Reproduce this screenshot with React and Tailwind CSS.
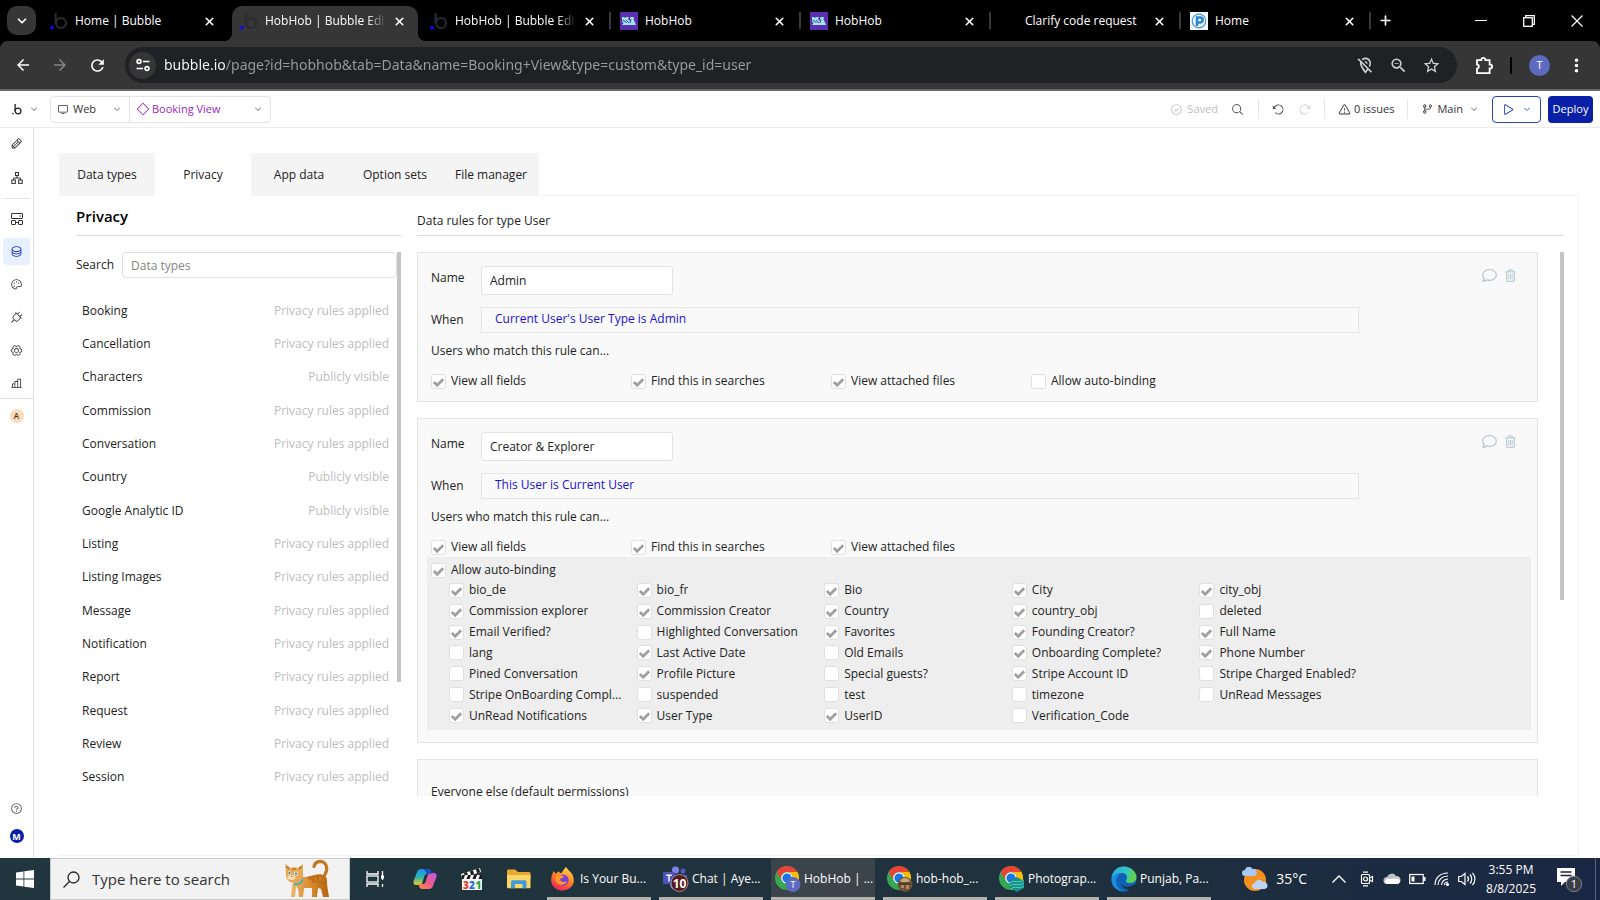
import React from "react";
import {
  PiPencil, PiDatabase, PiPalette, PiPlug, PiGearSix, PiChartBar, PiQuestion, PiWarning, PiGitBranch,
  PiPlay, PiMagnifyingGlass, PiArrowCounterClockwise, PiArrowClockwise, PiMonitor, PiDiamond,
  PiCheckCircle, PiCaretDown,
} from "react-icons/pi";
import {
  MdOutlineLocationOff, MdOutlineZoomOut, MdStarOutline, MdOutlineExtension, MdMoreVert, MdRefresh,
  MdArrowBack, MdArrowForward,
} from "react-icons/md";
import { FaRegComment } from "react-icons/fa";
import { ChevronDown, Plus, X } from "lucide-react";

/* ---------- favicons ---------- */

function BubbleFavicon() {
  return (
    <svg className="h-[18px] w-[18px]" viewBox="0 0 18 18" fill="none">
      <circle cx="11" cy="11" r="5" stroke="#2b2b2e" strokeWidth="2.2" />
      <path d="M5.6 1v10" stroke="#2b2b2e" strokeWidth="2.2" />
      <circle cx="2" cy="15.6" r="1.9" fill="#0a0af0" />
    </svg>
  );
}

function HobHobFavicon() {
  return (
    <svg className="h-[18px] w-[18px]" viewBox="0 0 18 18">
      <rect width="18" height="18" fill="#5b2fb0" />
      <path d="M2 5h2l1 1 1-1h3l-1 2 1.500 2 1-4h3.500l-.5 2 2.500 6H2l1.500-2L2 9.500z" fill="#9be8e2" />
      <path d="M2.500 8l4 2.500M6 8l3 3M11 7l-1 4" stroke="#5b2fb0" strokeWidth="1" />
    </svg>
  );
}

function HomeFavicon() {
  return (
    <svg className="h-[18px] w-[18px]" viewBox="0 0 18 18" fill="none">
      <rect width="18" height="18" fill="#f4f9fd" />
      <circle cx="9" cy="9" r="6.800" stroke="#4a96d8" strokeWidth="1.200" />
      <path d="M7 14V5.500h3.200a2.500 2.500 0 010 5H7" stroke="#2d83d0" strokeWidth="2.600" />
    </svg>
  );
}

const browserTabs = [
  { title: "Home | Bubble", icon: <BubbleFavicon /> },
  { title: "HobHob | Bubble Edi", icon: <BubbleFavicon />, active: true, fade: true },
  { title: "HobHob | Bubble Edi", icon: <BubbleFavicon />, fade: true },
  { title: "HobHob", icon: <HobHobFavicon /> },
  { title: "HobHob", icon: <HobHobFavicon /> },
  { title: "Clarify code request", icon: null },
  { title: "Home", icon: <HomeFavicon /> },
];

function BrowserTab({ tab, sepAfter }) {
  return (
    <div
      className={
        "relative flex h-[35px] w-[186px] items-center pr-3 pb-[5px] pl-2 " +
        (tab.active ? "rounded-t-[10px] bg-[#363636]" : "")
      }
    >
      {tab.active && (
        <>
          <span className="absolute bottom-0 -left-2 h-2 w-2 bg-[radial-gradient(circle_at_0_0,#000_8px,#363636_8px)]" />
          <span className="absolute -right-2 bottom-0 h-2 w-2 bg-[radial-gradient(circle_at_100%_0,#000_8px,#363636_8px)]" />
        </>
      )}
      <span className="mr-[7px] h-[18px] w-[18px] shrink-0">{tab.icon}</span>
      <button
        type="button"
        className={
          "min-w-0 flex-1 overflow-hidden text-left text-[12px] leading-4 whitespace-nowrap text-white " +
          (tab.fade ? "[mask-image:linear-gradient(90deg,#000_82%,transparent_98%)]" : "")
        }
      >
        {tab.title}
      </button>
      <button type="button" aria-label="Close tab" className="ml-1 text-white">
        <X size={13} strokeWidth={3} />
      </button>
      {sepAfter && <span className="absolute top-[6px] -right-[3px] h-[17px] w-[2px] bg-[#3a3a3a]" />}
    </div>
  );
}

function TabStrip() {
  return (
    <div className="flex h-[41px] shrink-0 items-end bg-black">
      <button
        type="button"
        aria-label="Search tabs"
        className="mb-[6px] ml-[7px] flex h-[29px] w-[29px] shrink-0 items-center justify-center rounded-[10px] bg-[#363636] text-white"
      >
        <ChevronDown size={14} strokeWidth={3} />
      </button>
      <div className="ml-[6px] flex gap-1">
        {browserTabs.map((t, i) => (
          <BrowserTab key={i} tab={t} sepAfter={i >= 2} />
        ))}
      </div>
      <button type="button" aria-label="New tab" className="mb-[13px] ml-[10px] text-white">
        <Plus size={15} strokeWidth={2.600} />
      </button>
      <div className="mr-[17px] mb-[14px] ml-auto flex items-center gap-9 text-white">
        <button type="button" aria-label="Minimize">
          <svg className="h-3 w-3" viewBox="0 0 12 12" stroke="currentColor">
            <path d="M0 5.500h12" />
          </svg>
        </button>
        <button type="button" aria-label="Restore">
          <svg className="h-3 w-3" viewBox="0 0 12 12" stroke="currentColor" fill="none" strokeWidth="1.300">
            <rect x="0.700" y="2.700" width="8.600" height="8.600" />
            <path d="M2.700 2.700V.7h8.600v8.600h-2" />
          </svg>
        </button>
        <button type="button" aria-label="Close window">
          <svg className="h-3 w-3" viewBox="0 0 12 12" stroke="currentColor" strokeWidth="1.200">
            <path d="M.5.500l11 11M11.500.500l-11 11" />
          </svg>
        </button>
      </div>
    </div>
  );
}

function ExtensionIcon() {
  return (
    <svg className="h-[19px] w-[19px]" viewBox="0 0 19 19" fill="none" stroke="currentColor" strokeWidth="1.800">
      <path d="M2 4.200h4.300v-.4a2 2 0 014 0v.4h4.300v4.300h.5a2 2 0 010 4h-.5v4.600H2v-4.400c2.600-.6 2.600-3.600 0-4.200z" />
    </svg>
  );
}

function Toolbar() {
  return (
    <div className="shrink-0 bg-black">
      <div className="flex h-[50px] items-center rounded-t-[8px] border-b-2 border-[#6a6a6a] bg-[#363636] text-white">
        <div className="ml-[14px] flex w-[111px] items-center gap-[19px]">
          <button type="button" aria-label="Back"><MdArrowBack size={18} /></button>
          <button type="button" aria-label="Forward" className="text-[#858585]"><MdArrowForward size={18} /></button>
          <button type="button" aria-label="Reload"><MdRefresh size={19} /></button>
        </div>
        <div className="flex h-9 flex-1 items-center rounded-full bg-[#202124] pr-4 pl-1">
          <button
            type="button"
            aria-label="Site information"
            className="flex h-[27px] w-[27px] items-center justify-center rounded-full bg-[#363636]"
          >
            <svg className="h-[14px] w-[14px]" viewBox="0 0 14 14" fill="none" stroke="#fff" strokeWidth="1.700">
              <circle cx="3" cy="3.500" r="1.900" />
              <path d="M7 3.500h6.500M.5 10.500H7" />
              <circle cx="11" cy="10.500" r="1.900" />
            </svg>
          </button>
          <input
            aria-label="Address"
            defaultValue="bubble.io/page?id=hobhob&tab=Data&name=Booking+View&type=custom&type_id=user"
            className="ml-2 min-w-0 flex-1 bg-[linear-gradient(90deg,#ffffff_0_62px,#9a9da1_62px)] bg-clip-text font-['Noto_Sans','Open_Sans',sans-serif] text-[14px] leading-5 text-transparent outline-none"
          />
          <div className="flex items-center gap-[14px] text-[#d0d0d0]">
            <button type="button" aria-label="Location blocked"><MdOutlineLocationOff size={19} /></button>
            <button type="button" aria-label="Zoom"><MdOutlineZoomOut size={19} /></button>
            <button type="button" aria-label="Bookmark"><MdStarOutline size={19} /></button>
          </div>
        </div>
        <button type="button" aria-label="Extensions" className="ml-[18px]"><ExtensionIcon /></button>
        <span className="ml-4 h-[17px] w-[2px] bg-black" />
        <button
          type="button"
          aria-label="Profile"
          className="ml-[17px] flex h-[21px] w-[21px] items-center justify-center rounded-full bg-[#5c6bc0] text-[11px] leading-4"
        >
          T
        </button>
        <button type="button" aria-label="Menu" className="mr-[13px] ml-4"><MdMoreVert size={21} /></button>
      </div>
    </div>
  );
}

/* ---------- editor header ---------- */

function Divider() {
  return <span className="h-5 w-px bg-[#e6e6e6]" />;
}

function EditorHeader() {
  return (
    <header className="flex h-[37px] shrink-0 items-center border-b border-[#ebebeb] bg-white text-[11px] leading-4 text-[#333]">
      <button type="button" aria-label="Bubble menu" className="ml-3 flex w-[38px] items-center gap-2">
        <svg className="h-[11px] w-[10px]" viewBox="0 0 10 11" fill="none" stroke="#222" strokeWidth="1.300">
          <circle cx="6" cy="7" r="2.900" />
          <path d="M3.100 0v7" />
          <circle cx="0.900" cy="9.600" r="0.800" fill="#222" stroke="none" />
        </svg>
        <PiCaretDown size={8} />
      </button>
      <div className="flex h-[27px] items-stretch rounded-[4px] border border-[#e3e3e3]">
        <div className="flex w-[79px] items-center border-r border-[#e3e3e3] pr-2 pl-[6px]">
          <PiMonitor size={12} />
          <select aria-label="Platform" className="ml-1 min-w-0 flex-1 appearance-none bg-transparent outline-none">
            <option>Web</option>
          </select>
          <PiCaretDown size={8} />
        </div>
        <div className="flex w-[140px] items-center pr-2 pl-[6px] text-[#9b1fc1]">
          <PiDiamond size={14} />
          <select aria-label="Page" className="ml-[2px] min-w-0 flex-1 appearance-none bg-transparent outline-none">
            <option>Booking View</option>
          </select>
          <PiCaretDown size={8} className="text-[#333]" />
        </div>
      </div>
      <div className="mr-[7px] ml-auto flex items-center">
        <span className="flex items-center gap-1 text-[#bdbdbd]">
          <PiCheckCircle size={13} />
          Saved
        </span>
        <button type="button" aria-label="Search" className="mr-[14px] ml-[13px]"><PiMagnifyingGlass size={13} /></button>
        <Divider />
        <button type="button" aria-label="Undo" className="ml-[13px]"><PiArrowCounterClockwise size={13} /></button>
        <button type="button" aria-label="Redo" className="mx-[13px] text-[#c9c9c9]"><PiArrowClockwise size={13} /></button>
        <Divider />
        <button type="button" className="mx-[13px] flex items-center gap-[3px]">
          <PiWarning size={13} />0 issues
        </button>
        <Divider />
        <button type="button" className="ml-[13px] flex items-center gap-1">
          <PiGitBranch size={12} />
          Main
          <PiCaretDown size={8} className="ml-[3px]" />
        </button>
        <div className="ml-[14px] flex h-[27px] w-[49px] items-center justify-between rounded-[4px] border border-[#2743c4] pr-[9px] pl-2 text-[#0f2bb0]">
          <button type="button" aria-label="Preview"><PiPlay size={13} /></button>
          <button type="button" aria-label="Preview options"><PiCaretDown size={8} /></button>
        </div>
        <button type="button" className="ml-[7px] h-[27px] w-[45px] rounded-[4px] bg-[#0a20a8] text-center font-medium text-white">
          Deploy
        </button>
      </div>
    </header>
  );
}

/* ---------- sidebar ---------- */

function TreeIcon() {
  return (
    <svg className="h-3 w-3" viewBox="0 0 12 12" fill="none" stroke="currentColor">
      <rect x="4.500" y="0.500" width="3" height="3" />
      <rect x="0.800" y="8" width="3.600" height="3.400" />
      <rect x="7.600" y="8" width="3.600" height="3.400" />
      <path d="M6 3.500V6M2.600 8V6h6.800v2" />
    </svg>
  );
}

function TemplateIcon() {
  return (
    <svg className="h-3 w-3" viewBox="0 0 12 12" fill="none" stroke="currentColor">
      <rect x="0.500" y="0.500" width="11" height="5" rx="0.500" />
      <rect x="0.500" y="7.500" width="4" height="4" rx="0.500" />
      <rect x="7.500" y="7.500" width="4" height="4" rx="0.500" />
      <path d="M4.500 9.500h3M8.500 3h1.500" />
    </svg>
  );
}

function SideButton({ label, active, children }) {
  return (
    <button
      type="button"
      aria-label={label}
      className={
        "flex h-[27px] w-[27px] items-center justify-center rounded-[4px] " +
        (active ? "bg-[#e6f0ff] text-[#1d2fc0]" : "text-[#333]")
      }
    >
      {children}
    </button>
  );
}

function Sidebar() {
  return (
    <nav className="flex w-[34px] shrink-0 flex-col items-center border-r border-[#dedede]">
      <div className="flex flex-col items-center gap-[7px] pt-[2px]">
        <SideButton label="Design"><PiPencil size={13} /></SideButton>
        <SideButton label="Workflow"><TreeIcon /></SideButton>
      </div>
      <span className="mt-[7px] h-px w-[27px] bg-[#e3e3e3]" />
      <div className="mt-[6px] flex flex-col items-center gap-[6px]">
        <SideButton label="Views"><TemplateIcon /></SideButton>
        <SideButton label="Data" active><PiDatabase size={13} /></SideButton>
        <SideButton label="Styles"><PiPalette size={13} /></SideButton>
        <SideButton label="Plugins"><PiPlug size={13} /></SideButton>
        <SideButton label="Settings"><PiGearSix size={13} /></SideButton>
        <SideButton label="Logs"><PiChartBar size={13} /></SideButton>
      </div>
      <div className="mt-px flex w-full flex-col items-center border-t border-[#dedede] pt-[10px]">
        <span className="flex h-[14px] w-[14px] items-center justify-center rounded-full bg-[#fcdcb8] text-[8px] leading-none font-semibold text-[#333]">
          A
        </span>
      </div>
      <div className="mt-auto mb-[15px] flex flex-col items-center gap-[14px]">
        <button type="button" aria-label="Help" className="text-[#444]"><PiQuestion size={13} /></button>
        <span className="flex h-[14px] w-[14px] items-center justify-center rounded-full bg-[#0a20a8] text-[9px] leading-none font-bold text-white">
          M
        </span>
      </div>
    </nav>
  );
}

/* ---------- data types list ---------- */

const RULES = "Privacy rules applied";
const OPEN = "Publicly visible";
const dataTypes = [
  ["Booking", RULES], ["Cancellation", RULES], ["Characters", OPEN], ["Commission", RULES],
  ["Conversation", RULES], ["Country", OPEN], ["Google Analytic ID", OPEN], ["Listing", RULES],
  ["Listing Images", RULES], ["Message", RULES], ["Notification", RULES], ["Report", RULES],
  ["Request", RULES], ["Review", RULES], ["Session", RULES],
];

function TypesColumn() {
  return (
    <section className="flex w-[325px] shrink-0 flex-col">
      <h1 className="flex h-10 items-center border-b border-[#dcdcdc] text-[15px] leading-5 font-semibold text-black">
        Privacy
      </h1>
      <div className="mt-4 flex min-h-0 flex-1 overflow-hidden">
        <div className="min-w-0 flex-1">
          <div className="flex items-center">
            <label htmlFor="type-search" className="w-[46px] leading-4">Search</label>
            <input
              id="type-search"
              placeholder="Data types"
              className="h-[26px] min-w-0 flex-1 rounded-[4px] border border-[#e0e0e0] px-2 outline-none placeholder:text-[#858585]"
            />
          </div>
          <ul className="mt-4 grid h-[500px] auto-rows-fr">
            {dataTypes.map(([name, note]) => (
              <li key={name} className="flex items-center justify-between pr-2 pl-[6px]">
                <a href="#type" className="text-[#222]">{name}</a>
                <span className="text-[#bdbdbd]">{note}</span>
              </li>
            ))}
          </ul>
        </div>
        <div className="h-[79%] w-1 bg-[#c4c4c4]" />
      </div>
    </section>
  );
}

/* ---------- rule cards ---------- */

function Check({ label, on }) {
  return (
    <label className="flex min-w-0 items-center gap-[5px] leading-4">
      <span className="grid h-[15px] w-[15px] shrink-0">
        <input
          type="checkbox"
          defaultChecked={on}
          className="peer h-[15px] w-[15px] appearance-none rounded-[3px] border border-[#e0e0e0] bg-white [grid-area:1/1]"
        />
        <svg
          className="pointer-events-none hidden h-[15px] w-[15px] [grid-area:1/1] peer-checked:block"
          viewBox="0 0 15 15"
          fill="none"
          stroke="#a0a0a0"
          strokeWidth="2.800"
        >
          <path d="M2.800 8l3.400 3.200L12.200 5.200" />
        </svg>
      </span>
      <span className="truncate">{label}</span>
    </label>
  );
}

const fields = [
  ["bio_de", 1], ["bio_fr", 1], ["Bio", 1], ["City", 1], ["city_obj", 1],
  ["Commission explorer", 1], ["Commission Creator", 1], ["Country", 1], ["country_obj", 1], ["deleted", 0],
  ["Email Verified?", 1], ["Highlighted Conversation", 0], ["Favorites", 1], ["Founding Creator?", 1], ["Full Name", 1],
  ["lang", 0], ["Last Active Date", 1], ["Old Emails", 0], ["Onboarding Complete?", 1], ["Phone Number", 1],
  ["Pined Conversation", 0], ["Profile Picture", 1], ["Special guests?", 0], ["Stripe Account ID", 1], ["Stripe Charged Enabled?", 0],
  ["Stripe OnBoarding Compl...", 0], ["suspended", 0], ["test", 0], ["timezone", 0], ["UnRead Messages", 0],
  ["UnRead Notifications", 1], ["User Type", 1], ["UserID", 1], ["Verification_Code", 0],
];

function TrashIcon() {
  return (
    <svg className="h-[13px] w-[11px]" viewBox="0 0 11 13" fill="none" stroke="currentColor">
      <path d="M.5 2.800h10M3.500 2.500L4 .8h3l.5 1.700M1.600 3v8.200c0 .8.400 1.200 1 1.200h5.800c.6 0 1-.4 1-1.200V3" strokeWidth="1.300" />
      <path d="M3.800 5v5.500M5.500 5v5.500M7.200 5v5.500" />
    </svg>
  );
}

function RuleCard({ id, name, when, binding }) {
  return (
    <article className="border border-[#e4e4e4] bg-[#f9f9f9] px-[9px] pt-[13px] pb-[12px]">
      <div className="flex items-start pl-1">
        <label htmlFor={id} className="w-[50px] pt-1 leading-4">Name</label>
        <input
          id={id}
          defaultValue={name}
          className="h-[29px] w-48 rounded-[3px] border border-[#e2e2e2] bg-white px-2 outline-none"
        />
        <div className="mr-3 ml-auto flex gap-2 pt-[2px] text-[#bccdd3]">
          <button type="button" aria-label="Comment"><FaRegComment size={15} /></button>
          <button type="button" aria-label="Delete rule"><TrashIcon /></button>
        </div>
      </div>
      <div className="mt-3 flex items-center pl-1">
        <span className="w-[50px] leading-4">When</span>
        <button
          type="button"
          className="h-[26px] w-[80%] border border-[#e4e4e4] px-[13px] pb-[2px] text-left leading-4 text-[#1c12cf]"
        >
          {when}
        </button>
      </div>
      <p className="mt-[10px] pl-1 leading-4">Users who match this rule can...</p>
      <div className="mt-[14px] grid grid-cols-[repeat(4,200px)] pl-1">
        <Check label="View all fields" on />
        <Check label="Find this in searches" on />
        <Check label="View attached files" on />
        {!binding && <Check label="Allow auto-binding" />}
      </div>
      {binding && (
        <div className="mt-[2px] -mr-[3px] bg-[#eeeeee] pt-[5px] pb-1 pl-1">
          <Check label="Allow auto-binding" on />
          <div className="mt-[2px] mr-36 ml-[18px] grid h-[146px] auto-rows-fr grid-cols-5">
            {fields.map(([f, on]) => (
              <Check key={f} label={f} on={!!on} />
            ))}
          </div>
        </div>
      )}
    </article>
  );
}

function RulesColumn() {
  return (
    <section className="flex min-w-0 flex-1 flex-col">
      <h2 className="flex h-10 items-center border-b border-[#dcdcdc] pt-[11px] leading-4">Data rules for type User</h2>
      <div className="mt-4 flex min-h-0 flex-1 overflow-hidden">
        <div className="flex min-w-0 flex-1 flex-col gap-4">
          <RuleCard id="rule-admin" name="Admin" when="Current User's User Type is Admin" />
          <RuleCard id="rule-creator" name="Creator & Explorer" when="This User is Current User" binding />
          <article className="border border-[#e4e4e4] bg-[#f9f9f9] px-[13px] pt-6 pb-12">
            <h3 className="leading-4">Everyone else (default permissions)</h3>
          </article>
        </div>
        <div className="ml-[22px] h-[64%] w-1 bg-[#c4c4c4]" />
      </div>
    </section>
  );
}

const pageTabs = ["Data types", "Privacy", "App data", "Option sets", "File manager"];

function Workspace() {
  return (
    <div className="flex min-h-0 flex-1 bg-white text-[12px] leading-4 text-[#222]">
      <Sidebar />
      <main className="mt-[25px] mr-[21px] mb-[2px] ml-[25px] flex min-w-0 flex-1 flex-col">
        <div className="flex h-[43px] shrink-0 items-stretch">
          <div className="grid w-[480px] grid-cols-5">
            {pageTabs.map((t) => (
              <button key={t} type="button" className={t === "Privacy" ? "bg-white" : "bg-[#f4f4f4]"}>
                {t}
              </button>
            ))}
          </div>
          <span className="flex-1 border-b border-[#f2f2f2]" />
        </div>
        <div className="flex min-h-0 flex-1 gap-4 border-r border-b border-[#f2f2f2] pr-[14px] pb-[59px] pl-[17px]">
          <TypesColumn />
          <RulesColumn />
        </div>
      </main>
    </div>
  );
}

/* ---------- taskbar ---------- */

function Cat() {
  return (
    <svg className="h-10 w-[50px]" viewBox="0 0 50 40" fill="none">
      <defs>
        <linearGradient id="fur" x1="0" y1="0" x2="1" y2="0">
          <stop stopColor="#eab867" /><stop offset="0.500" stopColor="#d98c30" /><stop offset="1" stopColor="#b4620f" />
        </linearGradient>
      </defs>
      <path d="M40 19c5-4 6-11 3-14.500-3-3.500-10-2.500-11 3" stroke="#c27722" strokeWidth="3.200" strokeLinecap="round" />
      <path d="M14 17c5 2 12 1 18-1 7-2 14 0 13 7 0 4 1 8 2 15h-6l-2-8-3-1-1 9h-5v-9h-8l-1 9h-4l-1-8-2-3-1 11H9l1-11z" fill="url(#fur)" />
      <path d="M25 18c6-1 10-3 15-1 3 1 5 4 5 7-6-2-13 4-20-6z" fill="#bf6d16" />
      <path d="M28 19l1 4M33 18l1 5M38 18v4" stroke="#d98c30" />
      <path d="M4 14L3 5l6 4c2-1 5-1 7 0l5-4v9c1 5-2 10-8 10S3 20 4 14z" fill="#e5a857" />
      <path d="M4.500 7.500l2.500 2.500M19.500 7.500L17 10M11 9v2M13 9v2" stroke="#b9661a" strokeWidth="1.200" />
      <circle cx="7.500" cy="14" r="1.700" fill="#e9f7fa" />
      <circle cx="14" cy="14.500" r="1.900" fill="#e9f7fa" />
      <circle cx="7.500" cy="14" r="1" fill="#1b6f8f" />
      <circle cx="14" cy="14.500" r="1.100" fill="#1b6f8f" />
      <ellipse cx="9.500" cy="18.500" rx="4" ry="2.500" fill="#f6dcae" />
      <path d="M9 17h2l-1 1z" fill="#9c4a2a" />
      <path d="M12 25c4 1 8-1 9-5" stroke="#29b6c5" strokeWidth="1.500" />
    </svg>
  );
}

function CopilotIcon() {
  return (
    <svg className="h-6 w-6" viewBox="0 0 24 24" fill="none">
      <defs>
        <linearGradient id="cpA" x1="0" y1="0" x2="0" y2="1">
          <stop stopColor="#1f8ef0" /><stop offset="0.500" stopColor="#29b7b0" /><stop offset="1" stopColor="#f2c31c" />
        </linearGradient>
        <linearGradient id="cpB" x1="1" y1="0" x2="0" y2="1">
          <stop stopColor="#b55cf0" /><stop offset="0.500" stopColor="#ee5a8e" /><stop offset="1" stopColor="#f9913c" />
        </linearGradient>
      </defs>
      <path d="M8 2h7c1.600 0 2.300 1 2.800 2.500L18.500 7H14c-1.500 0-2.300 1-2.800 2.500l-1.800 6C8.900 17 8 18 6.500 18H3C1 18 0 16.500.6 14L4 5c.7-2 2-3 4-3z" fill="url(#cpA)" />
      <path d="M16 22H9c-1.600 0-2.300-1-2.800-2.500L5.500 17H10c1.500 0 2.300-1 2.800-2.500l1.800-6C15.100 7 16 6 17.500 6H21c2 0 3 1.500 2.400 4L20 19c-.7 2-2 3-4 3z" fill="url(#cpB)" />
      <path d="M11 2h4c1.600 0 2.300 1 2.800 2.500L18.500 7H14z" fill="#1b4fc4" />
    </svg>
  );
}

function ClapperIcon() {
  return (
    <svg className="h-6 w-6" viewBox="0 0 24 24">
      <path d="M1 7L20 1l1 4L2 11z" fill="#f5f5f5" />
      <path d="M4 6l3-1 1 4-3 1zM10 4.200l3-1 1 4-3 1zM16 2.300l3-1 1 4-3 1z" fill="#1a1a1a" />
      <rect x="2" y="8" width="20" height="15" rx="1" fill="#f7f7f7" />
      <path d="M2 8h20v4H2z" fill="#1a1a1a" />
      <path d="M5 8h3l-1.500 4h-3zM11 8h3l-1.500 4h-3zM17 8h3l-1.500 4h-3z" fill="#f7f7f7" />
      <text x="3" y="21.500" fontSize="10" fontWeight="800" fill="#e03c2d">3</text>
      <text x="9" y="21.500" fontSize="10" fontWeight="800" fill="#2471cf">2</text>
      <text x="15.500" y="21.500" fontSize="10" fontWeight="800" fill="#28a745">1</text>
    </svg>
  );
}

function FolderIcon() {
  return (
    <svg className="h-6 w-6" viewBox="0 0 24 24">
      <path d="M0 4c0-1 .5-1.500 1.500-1.500H8L11 5h11c1 0 1.500.5 1.500 1.500V12H0z" fill="#e8a82e" />
      <path d="M0 8h23.500v12c0 .8-.4 1.200-1.200 1.200H1.200C.4 21.200 0 20.800 0 20z" fill="#fbd667" />
      <path d="M4 21.200V15c0-1 .7-1.700 1.700-1.700h12.100c1 0 1.700.7 1.700 1.700v6.200h-4V17H8v4.200z" fill="#3f9bdc" />
    </svg>
  );
}

function FirefoxIcon() {
  return (
    <svg className="h-6 w-6" viewBox="0 0 24 24">
      <defs>
        <linearGradient id="ffA" x1="0.800" y1="0" x2="0.300" y2="1">
          <stop stopColor="#ffe14a" /><stop offset="0.450" stopColor="#ff8a20" /><stop offset="1" stopColor="#f0205f" />
        </linearGradient>
      </defs>
      <path d="M15 0c1 2 4 4 6 7 3 5 2 10-1 13-4 4-11 5-16 1C0 18-1 12 1.500 7l.8-3L5 7c1-2 2-2 3-2.500.5 1 1.500 1.500 2.500 1.500C12 4 13 2 15 0z" fill="url(#ffA)" />
      <circle cx="12" cy="13" r="5.600" fill="#7a3fd6" />
      <path d="M5 9c3-2 6 0 8 0-1 2-3 2-4 3 0 3 4 4 7 2-1 4-7 5-10 2-2-2-2-5-1-7z" fill="#ff9a2a" />
    </svg>
  );
}

function TeamsIcon() {
  return (
    <svg className="h-[26px] w-[26px]" viewBox="0 0 26 26">
      <circle cx="12.500" cy="4" r="3.600" fill="#7b83eb" />
      <circle cx="20" cy="5" r="2.500" fill="#5059c9" />
      <path d="M15 9h9v7c0 3-2 5-4.500 5S15 19 15 16z" fill="#5059c9" />
      <path d="M7 9h11v9c0 3.500-2.500 6-5.500 6S7 21.500 7 18z" fill="#7b83eb" />
      <rect x="0" y="6" width="12" height="12" rx="1" fill="#4b53bc" />
      <path d="M3.200 9.200h5.600M6 9.200v6.300" stroke="#fff" strokeWidth="1.500" />
      <circle cx="16.500" cy="17" r="8.500" fill="#5a1a1a" stroke="#9a8a8a" strokeWidth="1" />
      <text x="16.500" y="21.500" textAnchor="middle" fontSize="12" fontWeight="700" fill="#fff">10</text>
    </svg>
  );
}

function ChromeIcon({ badge }) {
  return (
    <svg className="h-[26px] w-[26px]" viewBox="0 0 26 26">
      <circle cx="12" cy="12" r="12" fill="#34a853" />
      <path d="M12 0a12 12 0 0110.400 6H12a6 6 0 00-5.200 9L1.600 6A12 12 0 0112 0z" fill="#ea4335" />
      <path d="M22.400 6A12 12 0 0112 24l5.200-9A6 6 0 0012 6z" fill="#fbbc04" />
      <circle cx="12" cy="12" r="5.800" fill="#fff" />
      <circle cx="12" cy="12" r="4.600" fill="#1a73e8" />
      {badge === "T" && (
        <>
          <circle cx="18" cy="18.500" r="7.500" fill="#5c6bc0" />
          <text x="18" y="22" textAnchor="middle" fontSize="9" fill="#fff">T</text>
        </>
      )}
      {badge === "photo" && (
        <>
          <circle cx="18" cy="18.500" r="7.500" fill="#6b5238" />
          <path d="M13 15c2-4 8-4 10 0l-2 1h-6z" fill="#c9a878" />
          <path d="M14 19h3v3h-3zM19 19h3v4h-3z" fill="#b48a58" />
          <path d="M12 18h12" stroke="#33251a" />
        </>
      )}
      {badge === "wave" && (
        <>
          <path d="M10.500 15l7-4 7.500 4v7l-7 4-7.500-4z" fill="#178f86" />
          <path d="M11 17c4-4 9 1 14-3M11 20c4-4 9 1 14-3M12 23c4-4 8 1 13-3" stroke="#54d1c4" fill="none" />
        </>
      )}
    </svg>
  );
}

function EdgeIcon() {
  return (
    <svg className="h-[26px] w-[26px]" viewBox="0 0 26 26">
      <defs>
        <linearGradient id="edA" x1="0" y1="0" x2="1" y2="0.300">
          <stop stopColor="#2aa5e8" /><stop offset="0.600" stopColor="#35c5c5" /><stop offset="1" stopColor="#5fd24f" />
        </linearGradient>
      </defs>
      <circle cx="13" cy="13" r="12.500" fill="#0f62b8" />
      <path d="M.5 13C1 5 6 .5 13 .5S25.500 6 25.500 11c0 4-3 6-6.500 6-3 0-4-1-4-2s1-1.500 1-3.500C16 9 14 7 11 7 6 7 1.500 10 .5 13z" fill="url(#edA)" />
      <path d="M.5 13C1.500 9 6 7 10 7.500c-3 1-5 4-5 8 0 5 4 9 9 10C6 26 0 20 .5 13z" fill="#1b8ee0" />
      <path d="M10 14c-1 5 4 8 10 6l5-2 1 6-4 2c-1-1 0-2 1-3-6 3-14-1-13-9z" fill="#1f303e" />
    </svg>
  );
}

function WeatherIcon() {
  return (
    <svg className="h-[25px] w-[26px]" viewBox="0 0 26 25">
      <circle cx="13" cy="13" r="11" fill="#f4901e" />
      <path d="M3 9a3 3 0 010-6 4 4 0 017.500-1A3.500 3.500 0 0112 9z" fill="#a9c8f5" />
      <path d="M13 22a3 3 0 010-6 4 4 0 017.500-1 3.500 3.500 0 012.500 7z" fill="#bcd4f8" />
    </svg>
  );
}

const running = [
  { title: "Is Your Bu...", icon: <FirefoxIcon /> },
  { title: "Chat | Aye...", icon: <TeamsIcon /> },
  { title: "HobHob | ...", icon: <ChromeIcon badge="T" />, active: true },
  { title: "hob-hob_...", icon: <ChromeIcon badge="photo" /> },
  { title: "Photograp...", icon: <ChromeIcon badge="wave" /> },
  { title: "Punjab, Pa...", icon: <EdgeIcon /> },
];

function Taskbar() {
  return (
    <footer className="flex h-[42px] shrink-0 items-stretch bg-[linear-gradient(90deg,#21363e,#1f313d_65%,#1a2744)] text-white">
      <button type="button" aria-label="Start" className="flex w-[50px] items-center justify-center">
        <svg className="h-[18px] w-[18px]" viewBox="0 0 18 18" fill="#fff">
          <path d="M0 2.500L7.500 1.400v7.200H0zM8.300 1.300L18 0v8.600H8.300zM0 9.400h7.500v7.200L0 15.500zM8.300 9.400H18V18l-9.700-1.300z" />
        </svg>
      </button>
      <div className="flex w-[300px] items-center border border-[#c8c8c8] bg-[#f2f2f2] pl-3 text-[#222]">
        <svg className="h-[17px] w-[17px]" viewBox="0 0 17 17" fill="none" stroke="#222" strokeWidth="1.300">
          <circle cx="10.500" cy="6.500" r="5.500" />
          <path d="M6.500 10.500L.5 16.500" />
        </svg>
        <input
          aria-label="Type here to search"
          placeholder="Type here to search"
          className="ml-3 min-w-0 flex-1 bg-transparent text-[15px] leading-5 outline-none placeholder:text-[#333]"
        />
        <span className="mr-[17px]"><Cat /></span>
      </div>
      <div className="flex items-center gap-[23px] pl-[15px]">
        <button type="button" aria-label="Task view" className="ml-px">
          <svg className="h-[18px] w-[18px]" viewBox="0 0 18 18" fill="none" stroke="#fff" strokeWidth="1.300">
            <path d="M1 1v3h11V1M1 17v-3h11v3M16.500 1v9M16.500 14v3" />
            <rect x="1" y="6" width="11" height="6" />
            <path d="M15 7h3" strokeWidth="3" />
          </svg>
        </button>
        <button type="button" aria-label="Copilot" className="ml-[6px]"><CopilotIcon /></button>
        <button type="button" aria-label="Video editor"><ClapperIcon /></button>
        <button type="button" aria-label="File Explorer"><FolderIcon /></button>
      </div>
      <div className="ml-4 flex gap-2">
        {running.map((r) => (
          <button
            key={r.title}
            type="button"
            className={
              "flex w-[104px] items-center gap-[3px] border-b-[3px] border-[#b3b3b0] pt-[3px] pl-1 text-[12px] leading-4 whitespace-nowrap " +
              (r.active ? "bg-[#3b444a]" : "")
            }
          >
            <span className="w-[26px]">{r.icon}</span>
            {r.title}
          </button>
        ))}
      </div>
      <div className="mr-1 ml-auto flex items-center border-r border-[#5b6478] pr-3">
        <WeatherIcon />
        <span className="mr-6 ml-2 text-[14px] leading-5">35°C</span>
        <div className="flex items-center gap-2">
          <svg className="mr-1 h-4 w-4" viewBox="0 0 16 16" fill="none" stroke="#fff" strokeWidth="1.300"><path d="M1.500 11.500L8 5l6.500 6.500" /></svg>
          <svg className="h-4 w-4" viewBox="0 0 16 16" fill="none" stroke="#fff" strokeWidth="1.200">
            <rect x="2.500" y="3.500" width="8" height="9" rx="1" /><circle cx="6.500" cy="8" r="2" /><path d="M10.500 7l3-1.500v5l-3-1.500M4 1.200h5M4 14.800h5" />
          </svg>
          <svg className="h-4 w-[18px]" viewBox="0 0 18 16"><path d="M4 13a3.500 3.500 0 010-7 5 5 0 019-1 4 4 0 011 8z" fill="#bfc3c9" /><path d="M3 13a3 3 0 013-5l9-.5A3 3 0 0115 13z" fill="#fff" /></svg>
          <svg className="h-4 w-[17px]" viewBox="0 0 17 16" fill="none" stroke="#fff" strokeWidth="1.200"><rect x="0.700" y="3.500" width="13.500" height="9" /><path d="M15.500 6v4" strokeWidth="2" /><rect x="2.500" y="5.500" width="3" height="5" fill="#fff" stroke="none" /></svg>
          <svg className="h-4 w-4" viewBox="0 0 16 16" fill="none" stroke="#fff" strokeWidth="1.200"><path d="M1 14C1 7 6 2 14 2M4 14c0-5 4-9 10-9M7.500 14c0-3.500 3-6 6.500-6M10.500 14c0-2 1.500-3 3.500-3" /><circle cx="13.500" cy="13.500" r="1" fill="#fff" /></svg>
          <svg className="h-4 w-[18px]" viewBox="0 0 18 16" fill="none" stroke="#fff" strokeWidth="1.200"><path d="M.7 5.500h2.500L7 2.500v11L3.200 10.500H.7zM9.500 5.500c1.300 1.500 1.300 3.500 0 5M12 3.500c2.300 2.500 2.300 6.500 0 9M14.500 1.800c3.200 3.500 3.200 9 0 12.400" /></svg>
        </div>
        <div className="mr-[21px] ml-[10px] text-center text-[12px] leading-[19px]">
          <div>3:55 PM</div>
          <div>8/8/2025</div>
        </div>
        <svg className="h-[26px] w-[26px]" viewBox="0 0 26 26">
          <path d="M0 2h18v14H8l-4 4v-4H0z" fill="#fff" />
          <path d="M3.500 6h11M3.500 9.500h11" stroke="#223" strokeWidth="1.400" />
          <circle cx="17" cy="18" r="7.700" fill="#3a3f48" stroke="#7b808a" />
          <text x="17" y="22" textAnchor="middle" fontSize="11" fill="#fff">1</text>
        </svg>
      </div>
    </footer>
  );
}

export default function App() {
  return (
    <div className="flex h-screen flex-col overflow-hidden bg-white font-['Open_Sans','Noto_Sans',sans-serif]">
      <TabStrip />
      <Toolbar />
      <EditorHeader />
      <Workspace />
      <Taskbar />
    </div>
  );
}
